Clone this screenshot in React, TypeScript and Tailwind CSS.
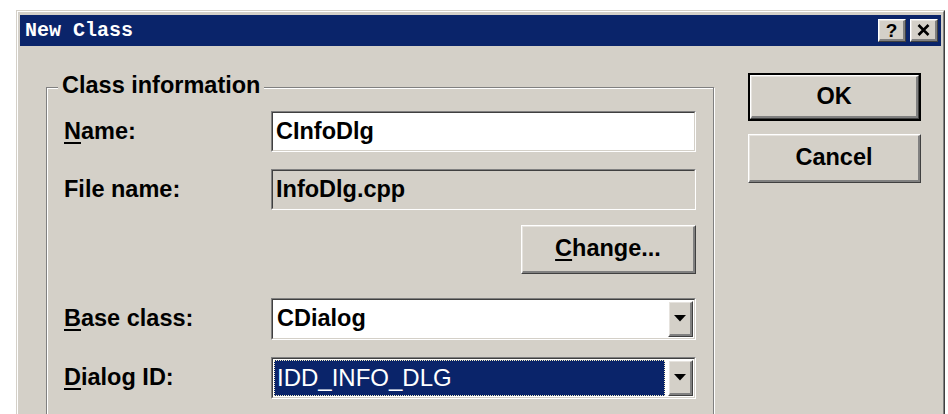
import React from "react";

function Raised({
  className,
  innerClassName,
  children,
}: {
  className?: string;
  innerClassName?: string;
  children?: React.ReactNode;
}) {
  return (
    <div
      className={
        "border border-t-white border-l-white border-r-[#404040] border-b-[#404040] bg-[#d4d0c8] " +
        (className ?? "")
      }
    >
      <div
        className={
          "h-full w-full border border-t-[#e6e3de] border-l-[#e6e3de] border-r-2 border-b-2 border-r-[#808080] border-b-[#808080] flex items-center justify-center " +
          (innerClassName ?? "")
        }
      >
        {children}
      </div>
    </div>
  );
}

function Sunken({
  className,
  innerClassName,
  children,
}: {
  className?: string;
  innerClassName?: string;
  children?: React.ReactNode;
}) {
  return (
    <div
      className={
        "border border-t-[#808080] border-l-[#808080] border-r-white border-b-white " +
        (className ?? "")
      }
    >
      <div
        className={
          "h-full w-full border border-t-[#404040] border-l-[#404040] border-r-[#d4d0c8] border-b-[#d4d0c8] flex items-center " +
          (innerClassName ?? "")
        }
      >
        {children}
      </div>
    </div>
  );
}

function DropArrow() {
  return (
    <Raised className="w-[25px] h-full">
      <svg width="12" height="7" viewBox="0 0 12 7">
        <polygon points="0,0 12,0 6,6.5" fill="#000" />
      </svg>
    </Raised>
  );
}

function U({ children }: { children: React.ReactNode }) {
  return <span className="underline decoration-2 underline-offset-[3px]">{children}</span>;
}

function Row({ label, children, className }: { label: React.ReactNode; children: React.ReactNode; className?: string }) {
  return (
    <div className={"flex items-center " + (className ?? "")}>
      <div className="w-[207px] shrink-0 leading-none">{label}</div>
      <div className="flex-1 h-full">{children}</div>
    </div>
  );
}

export default function App() {
  return (
    <div
      className="w-[948px] h-[414px] overflow-hidden bg-white pl-[16px] pt-[10px] text-black font-bold text-[23.5px]"
      style={{ fontFamily: '"Liberation Sans", Arial, sans-serif' }}
    >
      <div className="w-[929px] h-[430px] border border-t-[#d4d0c8] border-l-[#d4d0c8] border-r-[#404040] border-b-[#404040] bg-[#d4d0c8]">
        <div className="h-full border border-t-white border-l-white border-r-[#808080] border-b-[#808080] px-[2px] pt-[3px] flex flex-col">
          {/* Title bar */}
          <div className="h-[31px] shrink-0 bg-[#0a246a] flex items-center pl-[5px] pr-[3px]">
            <span
              className="text-[20px] font-bold text-white leading-none tracking-[0px]"
              style={{ fontFamily: '"Liberation Mono", "DejaVu Sans Mono", monospace' }}
            >
              New Class
            </span>
            <div className="ml-auto flex gap-[4px]">
              <Raised className="w-[28px] h-[23px]">
                <span className="text-[19px] leading-none font-bold">?</span>
              </Raised>
              <Raised className="w-[28px] h-[23px]">
                <svg width="13" height="12" viewBox="0 0 13 12">
                  <path d="M1.5 1 L11.5 11 M11.5 1 L1.5 11" stroke="#000" strokeWidth="2.6" />
                </svg>
              </Raised>
            </div>
          </div>

          {/* Body */}
          <div className="flex pl-[26px]">
            {/* Group box */}
            <div className="relative mt-[41px] w-[668px] h-[340px] shrink-0 border border-[#808080] shadow-[inset_1px_1px_0_#ffffff,1px_1px_0_#ffffff]">
              <div className="absolute left-[11px] -top-[16px] px-[4px] bg-[#d4d0c8] leading-[27px]">
                Class information
              </div>
              <div className="flex flex-col pt-[23px] pl-[17px] pr-[17px]">
                <Row
                  className="h-[41px]"
                  label={
                    <>
                      <U>N</U>ame:
                    </>
                  }
                >
                  <Sunken className="h-full bg-white" innerClassName="pl-[3px]">
                    CInfoDlg
                  </Sunken>
                </Row>
                <Row className="h-[41px] mt-[17px]" label="File name:">
                  <Sunken className="h-full" innerClassName="pl-[3px]">
                    InfoDlg.cpp
                  </Sunken>
                </Row>
                <div className="flex justify-end mt-[15px]">
                  <Raised className="w-[175px] h-[49px]">
                    <span className="leading-none">
                      <U>C</U>hange...
                    </span>
                  </Raised>
                </div>
                <Row
                  className="h-[42px] mt-[24px]"
                  label={
                    <>
                      <U>B</U>ase class:
                    </>
                  }
                >
                  <Sunken className="h-full bg-white" innerClassName="pl-[4px] py-[1px] pr-[1px]">
                    <span className="flex-1">CDialog</span>
                    <DropArrow />
                  </Sunken>
                </Row>
                <Row
                  className="h-[42px] mt-[17px]"
                  label={
                    <>
                      <U>D</U>ialog ID:
                    </>
                  }
                >
                  <Sunken className="h-full bg-white" innerClassName="pl-[1px] py-[1px] pr-[1px]">
                    <div className="flex-1 h-full mr-[3px] bg-[#0a246a] border border-dotted border-[#f2ecc4] flex items-center pl-[2px]">
                      <span className="text-white font-normal text-[24px] leading-none">IDD_INFO_DLG</span>
                    </div>
                    <DropArrow />
                  </Sunken>
                </Row>
              </div>
            </div>

            {/* Right buttons */}
            <div className="ml-[34px] mt-[27px] flex flex-col gap-[13px] w-[173px]">
              <div className="border-2 border-black">
                <Raised className="h-[44px]">
                  <span className="leading-none">OK</span>
                </Raised>
              </div>
              <Raised className="h-[49px]">
                <span className="leading-none">Cancel</span>
              </Raised>
            </div>
          </div>
        </div>
      </div>
    </div>
  );
}
